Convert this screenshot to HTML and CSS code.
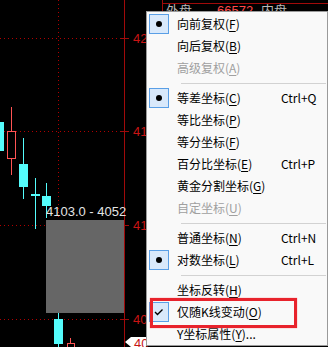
FILE: index.html
```html
<!DOCTYPE html>
<html lang="zh">
<head>
<meta charset="utf-8">
<link rel="stylesheet" href="styles.css">
</head>
<body>
<div class="screen">
  <svg class="chart" width="328" height="347" viewBox="0 0 328 347">
    <g class="dots">
      <line x1="0" y1="38.5" x2="124" y2="38.5"/>
      <line x1="0" y1="131.5" x2="124" y2="131.5"/>
      <line x1="0" y1="225.5" x2="124" y2="225.5"/>
      <line x1="0" y1="319.5" x2="124" y2="319.5"/>
      <line x1="58.5" y1="0" x2="58.5" y2="220"/>
    </g>
    <g class="axis">
      <line x1="124.5" y1="0" x2="124.5" y2="347"/>
      <line x1="120" y1="38.5" x2="129" y2="38.5"/>
      <line x1="120" y1="131.5" x2="129" y2="131.5"/>
      <line x1="120" y1="225.5" x2="129" y2="225.5"/>
      <line x1="120" y1="319.5" x2="129" y2="319.5"/>
      <line x1="162.5" y1="0" x2="162.5" y2="12"/>
      <line x1="162" y1="3.5" x2="328" y2="3.5"/>
    </g>
    <g class="info">
      <text x="166" y="15" class="grey">外盘</text>
      <text x="217" y="15" class="red">66572</text>
      <text x="261" y="15" class="grey">内盘</text>
    </g>
    <g class="up">
      <rect x="0" y="122" width="4" height="29"/>
      <line x1="23.5" y1="138" x2="23.5" y2="199"/>
      <rect x="19" y="164" width="9" height="23"/>
      <line x1="35.5" y1="178" x2="35.5" y2="229"/>
      <rect x="31" y="194" width="9" height="2"/>
      <line x1="46.5" y1="183" x2="46.5" y2="218"/>
      <rect x="42" y="196" width="9" height="10"/>
      <line x1="58.5" y1="313" x2="58.5" y2="347"/>
      <rect x="54" y="319" width="9" height="25"/>
    </g>
    <g class="down">
      <line x1="11.5" y1="107" x2="11.5" y2="131"/>
      <line x1="11.5" y1="159" x2="11.5" y2="175"/>
      <rect x="7.5" y="131.5" width="8" height="27"/>
      <line x1="70.5" y1="338" x2="70.5" y2="343"/>
      <rect x="67.5" y="343.5" width="7" height="10"/>
    </g>
    <text x="46" y="216" class="range">4103.0 - 4052</text>
    <rect class="selbox" x="46" y="220" width="78" height="93"/>
    <g class="labels">
      <text x="133" y="43">42</text>
      <text x="133" y="136">41</text>
      <text x="133" y="230">41</text>
      <text x="133" y="324">40</text>
      <polygon class="tag" points="125,342 131,337 146,337 146,347 131,347"/>
      <text x="134" y="348">40</text>
    </g>
  </svg>

  <div class="menu">
    <div class="item"><span class="mark"><span class="dot"></span></span><span class="label">向前复权(<u>F</u>)</span><span class="key"></span></div>
    <div class="item"><span class="mark-empty"></span><span class="label">向后复权(<u>B</u>)</span><span class="key"></span></div>
    <div class="item disabled"><span class="mark-empty"></span><span class="label">高级复权(<u>A</u>)</span><span class="key"></span></div>
    <div class="sep"></div>
    <div class="item"><span class="mark"><span class="dot"></span></span><span class="label">等差坐标(<u>C</u>)</span><span class="key">Ctrl+Q</span></div>
    <div class="item"><span class="mark-empty"></span><span class="label">等比坐标(<u>P</u>)</span><span class="key"></span></div>
    <div class="item"><span class="mark-empty"></span><span class="label">等分坐标(<u>F</u>)</span><span class="key"></span></div>
    <div class="item"><span class="mark-empty"></span><span class="label">百分比坐标(<u>E</u>)</span><span class="key">Ctrl+P</span></div>
    <div class="item"><span class="mark-empty"></span><span class="label">黄金分割坐标(<u>G</u>)</span><span class="key"></span></div>
    <div class="item disabled"><span class="mark-empty"></span><span class="label">自定坐标(<u>U</u>)</span><span class="key"></span></div>
    <div class="sep"></div>
    <div class="item"><span class="mark-empty"></span><span class="label">普通坐标(<u>N</u>)</span><span class="key">Ctrl+N</span></div>
    <div class="item"><span class="mark"><span class="dot"></span></span><span class="label">对数坐标(<u>L</u>)</span><span class="key">Ctrl+L</span></div>
    <div class="sep"></div>
    <div class="item"><span class="mark-empty"></span><span class="label">坐标反转(<u>H</u>)</span><span class="key"></span></div>
    <div class="item"><span class="mark"><svg class="check" width="10" height="8" viewBox="0 0 10 8"><path d="M1 4 L3.5 6.5 L8.5 1.5"/></svg></span><span class="label">仅随K线变动(<u>O</u>)</span><span class="key"></span></div>
    <div class="item"><span class="mark-empty"></span><span class="label">Y坐标属性(<u>Y</u>)...</span><span class="key"></span></div>
  </div>
  <div class="highlight"></div>
</div>
</body>
</html>
```

FILE: styles.css
```css
html, body {
  margin: 0;
  padding: 0;
  background: #000;
  overflow: hidden;
}

.screen {
  position: relative;
  width: 328px;
  height: 347px;
  overflow: hidden;
  background: #000;
}

.chart {
  display: block;
}

.dots line {
  stroke: #b00000;
  stroke-width: 1;
  stroke-dasharray: 1 3;
}

.axis line {
  stroke: #a00a0a;
  stroke-width: 1;
}

.info text {
  font-family: "Noto Sans CJK SC", "Liberation Sans", sans-serif;
  font-size: 13px;
}

.info .grey { fill: #b8b8b8; }
.info .red { fill: #ff4a4a; font-family: "Liberation Sans", sans-serif; }

.up rect { fill: #54fcfc; }
.up line { stroke: #54fcfc; stroke-width: 1; }

.down line { stroke: #ff5454; stroke-width: 1; }
.down rect { fill: #000; stroke: #ff5454; stroke-width: 1; }

.range {
  font-family: "Liberation Sans", sans-serif;
  font-size: 13px;
  fill: #e4e4e4;
}

.selbox { fill: #666666; }

.labels text {
  font-family: "Liberation Sans", sans-serif;
  font-size: 13px;
  fill: #c81414;
}

.labels .tag { fill: #ffffff; }

.menu {
  position: absolute;
  left: 146px;
  top: 11px;
  width: 182px;
  box-sizing: border-box;
  border: 1px solid #9a9a9a;
  padding-top: 1px;
  background: #f9f9f9;
  font-family: "Noto Sans CJK SC", sans-serif;
  font-size: 12px;
  color: #000;
}

.item {
  display: grid;
  grid-template-columns: 28px 104px 1fr;
  align-items: center;
  height: 22px;
  padding-left: 2px;
  line-height: 22px;
  white-space: nowrap;
}

.item.disabled { color: #a0a0a0; }

.mark, .mark-empty {
  width: 20px;
  height: 20px;
  box-sizing: border-box;
}

.mark {
  display: flex;
  align-items: center;
  justify-content: center;
  border: 1px solid #5a9fe6;
  background: #d9e9fb;
}

.dot {
  width: 6px;
  height: 6px;
  border-radius: 50%;
  background: #000;
}

.check path {
  fill: none;
  stroke: #000;
  stroke-width: 1.4;
}

.label u {
  text-decoration: underline;
  text-underline-offset: 2px;
}

.key {
  font-family: "Noto Sans CJK SC", sans-serif;
}

.sep {
  height: 1px;
  margin: 4px 1px 3px 34px;
  background: #d2d2d2;
}

.highlight {
  position: absolute;
  left: 150px;
  top: 298px;
  width: 147px;
  height: 30px;
  box-sizing: border-box;
  border: 3px solid #e8232c;
  box-shadow: 0 0 1px #ff6b70;
}
```
